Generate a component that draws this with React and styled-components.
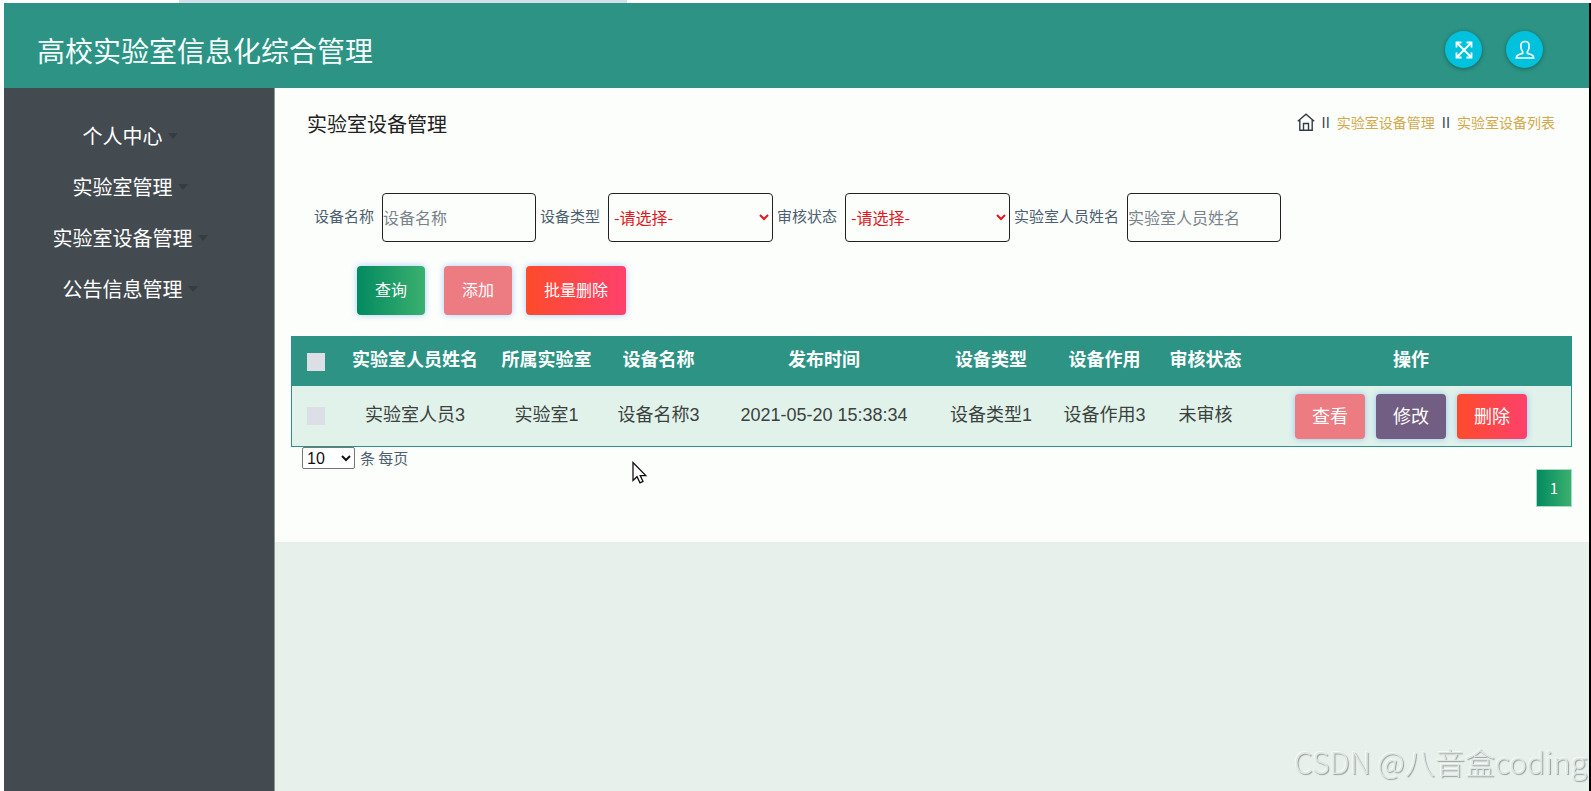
import React from 'react';
import styled, { createGlobalStyle } from 'styled-components';

const sans = '"Liberation Sans", "Noto Sans CJK SC", sans-serif';
const cjk = '"Noto Sans CJK SC", sans-serif';
const fills = {
  green: 'linear-gradient(90deg, #038a60, #3bb06f)',
  pink: '#ec7b82',
  purple: '#725e82',
  red: 'linear-gradient(90deg, #fd4b2b, #fe416c)',
};

const GlobalStyle = createGlobalStyle`
  *, *::before, *::after { box-sizing: border-box; }
  body { margin: 0; background: #fff; font-family: ${sans}; }
  button, input, select { font-family: inherit; }
`;

const Page = styled.div`
  display: flex;
  flex-direction: column;
  min-height: 100vh;
`;

const LoadingTrack = styled.div`
  height: 3px;
  padding-left: 179px;
`;

const LoadingBar = styled.div`
  width: 448px;
  max-width: 100%;
  height: 100%;
  background: #d5dfe9;
`;

const Frame = styled.div`
  flex: 1;
  display: flex;
  flex-direction: column;
  margin-left: 4px;
  border-right: 2px solid #000;
`;

const Header = styled.header`
  display: flex;
  align-items: center;
  justify-content: space-between;
  height: 85px;
  padding: 8px 46px 0 33px;
  background: #2c9385;
`;

const Brand = styled.h1`
  margin: 0;
  color: #f6fffc;
  font: 400 28px/40px ${cjk};
`;

const HeaderActions = styled.div`
  display: flex;
  gap: 24px;
`;

const RoundButton = styled.button`
  display: grid;
  place-items: center;
  width: 37px;
  height: 37px;
  padding: 0;
  border: 0;
  border-radius: 50%;
  background: #00c2dc;
  color: #fff;
  box-shadow: 0 1px 4px rgba(0, 0, 0, 0.35);
`;

const Body = styled.div`
  flex: 1;
  display: flex;
`;

const Sidebar = styled.nav`
  flex: 0 0 271px;
  padding: 22px 18px 0 0;
  background: #434a50;
  border-right: 1px solid #8a9794;
`;

const MenuItem = styled.a`
  display: flex;
  align-items: center;
  justify-content: center;
  gap: 5px;
  height: 51px;
  color: #fff;
  font: 400 20px/30px ${cjk};
  text-decoration: none;

  &::after {
    content: '';
    border: 5px solid transparent;
    border-top: 6px solid #343d40;
    border-bottom: 0;
  }
`;

const Main = styled.main`
  flex: 1;
  min-width: 0;
  background: #e7f0eb;
`;

const Panel = styled.section`
  min-height: 454px;
  padding: 20px 17px 0 16px;
  background: #fcfefb;
`;

const PanelHead = styled.div`
  display: flex;
  justify-content: space-between;
  align-items: flex-start;
  height: 32px;
  padding: 0 17px 0 16px;
`;

const PanelTitle = styled.h2`
  margin: 0;
  color: #222;
  font: 400 20px/32px ${cjk};
`;

const Breadcrumb = styled.nav`
  display: flex;
  align-items: center;
  gap: 7px;
  color: #33424f;
  font: 400 14px/28px ${cjk};

  a { color: #d3a94c; text-decoration: none; }
  svg { display: block; }
`;

const Filters = styled.form`
  padding: 53px 0 0 22px;
`;

const FieldRow = styled.div`
  display: flex;
  gap: 3px;
`;

const Field = styled.label`
  display: flex;
  align-items: center;
  gap: 8px;
  color: #4d5f70;
  font: 400 15px/24px ${cjk};
  white-space: nowrap;
`;

const FieldName = styled.span`
  padding: 0 0 4px 1px;
`;

const TextInput = styled.input`
  width: 154px;
  height: 49px;
  padding: 0 0 2px;
  border: 1px solid #222;
  border-radius: 4px;
  background: transparent;
  font-size: 16px;

  &::placeholder { color: #78838b; }
`;

const SelectInput = styled.select`
  width: 165px;
  height: 49px;
  padding: 0 2px 2px 1px;
  border: 1px solid #222;
  border-radius: 4px;
  background: transparent;
  color: #e3161d;
  font-size: 16px;
`;

const FilterActions = styled.div`
  display: flex;
  gap: 14px;
  padding: 24px 0 0 44px;

  button:first-child { margin-right: 5px; }
`;

const Button = styled.button`
  height: ${(p) => (p.$row ? 45 : 49)}px;
  padding: 0 ${(p) => (p.$row ? 17 : 18)}px 3px;
  border: 0;
  border-radius: 4px;
  background: ${(p) => fills[p.$fill]};
  box-shadow: 0 0 6px rgba(60, 140, 255, 0.45);
  color: #fff;
  font-family: ${cjk};
  font-size: ${(p) => (p.$row ? 18 : 16)}px;
`;

const RowActions = styled.div`
  display: flex;
  justify-content: center;
  gap: 11px;
  padding-top: 3px;
`;

const Table = styled.table`
  width: 100%;
  margin-top: 21px;
  table-layout: fixed;
  border-collapse: separate;
  border-spacing: 0;
  border: 1px solid #2c9385;
  color: #3c4240;
  font-size: 18px;
  line-height: 26px;
  text-align: center;

  th, td { padding: 0 0 3px; white-space: nowrap; }
  th { height: 49px; background: #2c9385; color: #fff; }
  td { height: 60px; background: #e1f2ea; }
`;

const Tick = styled.input`
  appearance: none;
  display: block;
  width: 18px;
  height: 18px;
  margin: 3px auto 0;
  background: #dce0e6;
`;

const PageSize = styled.label`
  display: flex;
  align-items: center;
  gap: 5px;
  height: 22px;
  padding-left: 11px;
  color: #4d5f70;
  font: 400 15px/20px ${cjk};

  select {
    width: 53px;
    height: 22px;
    border: 1px solid #767676;
    border-radius: 2px;
    background: #fff;
    color: #111;
    font: 400 16px ${sans};
  }
`;

const Pager = styled.div`
  display: flex;
  justify-content: flex-end;

  button {
    width: 36px;
    height: 38px;
    padding: 0 0 2px;
    border: 1px solid #a6dcc6;
    background: ${fills.green};
    color: #fff;
    font: 400 15px ${cjk};
  }
`;

const Pointer = styled.svg`
  position: absolute;
  left: 632px;
  top: 461px;
`;

const Watermark = styled.div`
  position: fixed;
  right: 4px;
  bottom: 8px;
  color: #dfe5e2;
  font: 300 30px/44px ${cjk};
  text-shadow: 1px 1px 1px #979f9c, -1px -1px 0 #f4f8f6;
`;

const menu = ['个人中心', '实验室管理', '实验室设备管理', '公告信息管理'];

const columns = [
  ['实验室人员姓名', 152],
  ['所属实验室', 111],
  ['设备名称', 113],
  ['发布时间', 218],
  ['设备类型', 116],
  ['设备作用', 111],
  ['审核状态', 91],
  ['操作', 320],
];

const rows = [
  ['实验室人员3', '实验室1', '设备名称3', '2021-05-20 15:38:34', '设备类型1', '设备作用3', '未审核'],
];

const ExpandIcon = () => (
  <svg width="18" height="18" viewBox="0 0 18 18" fill="none" stroke="currentColor" strokeWidth="1.8">
    <path d="M2 2l14 14M16 2L2 16" />
    <path d="M1.500 6.500v-5h5M11.500 1.500h5v5M16.500 11.500v5h-5M6.500 16.500h-5v-5" />
  </svg>
);

const UserIcon = () => (
  <svg width="20" height="20" viewBox="0 0 20 20" fill="none" stroke="currentColor" strokeWidth="1.7">
    <path d="M7.600 11.600C6.200 10 5.800 8 5.800 5.800C5.800 3.200 7.500 1.500 10 1.500s4.200 1.700 4.200 4.300c0 2.200-.4 4.200-1.800 5.800v1.800l4.200 1.400c1.300.5 2 1.500 2.100 3.200H1.300c.1-1.700.8-2.700 2.100-3.200l4.200-1.400z" />
  </svg>
);

const HomeIcon = () => (
  <svg width="18" height="18" viewBox="0 0 18 18" fill="none" stroke="#333c44" strokeWidth="1.4">
    <path d="M.8 8.300L9 1.200l8.200 7.100M2.800 7v10.200h12.400V7M6.500 17v-6.500h5V17" />
  </svg>
);

export default function App() {
  return (
    <Page>
      <GlobalStyle />
      <LoadingTrack><LoadingBar /></LoadingTrack>
      <Frame>
        <Header>
          <Brand>高校实验室信息化综合管理</Brand>
          <HeaderActions>
            <RoundButton type="button" aria-label="全屏"><ExpandIcon /></RoundButton>
            <RoundButton type="button" aria-label="用户"><UserIcon /></RoundButton>
          </HeaderActions>
        </Header>
        <Body>
          <Sidebar>
            {menu.map((name) => <MenuItem key={name} href="#">{name}</MenuItem>)}
          </Sidebar>
          <Main>
            <Panel>
              <PanelHead>
                <PanelTitle>实验室设备管理</PanelTitle>
                <Breadcrumb>
                  <a href="#" aria-label="首页"><HomeIcon /></a>
                  <span>II</span>
                  <a href="#">实验室设备管理</a>
                  <span>II</span>
                  <a href="#">实验室设备列表</a>
                </Breadcrumb>
              </PanelHead>
              <Filters onSubmit={(e) => e.preventDefault()}>
                <FieldRow>
                  <Field><FieldName>设备名称</FieldName><TextInput placeholder="设备名称" /></Field>
                  <Field><FieldName>设备类型</FieldName><SelectInput><option>-请选择-</option></SelectInput></Field>
                  <Field><FieldName>审核状态</FieldName><SelectInput><option>-请选择-</option></SelectInput></Field>
                  <Field><FieldName>实验室人员姓名</FieldName><TextInput placeholder="实验室人员姓名" /></Field>
                </FieldRow>
                <FilterActions>
                  <Button $fill="green">查询</Button>
                  <Button type="button" $fill="pink">添加</Button>
                  <Button type="button" $fill="red">批量删除</Button>
                </FilterActions>
              </Filters>
              <Table>
                <colgroup>
                  <col width="47" />
                  {columns.map(([name, width]) => <col key={name} width={width} />)}
                </colgroup>
                <thead>
                  <tr>
                    <th><Tick type="checkbox" aria-label="全选" /></th>
                    {columns.map(([name]) => <th key={name}>{name}</th>)}
                  </tr>
                </thead>
                <tbody>
                  {rows.map((row) => (
                    <tr key={row[0]}>
                      <td><Tick type="checkbox" aria-label={row[0]} /></td>
                      {row.map((cell) => <td key={cell}>{cell}</td>)}
                      <td>
                        <RowActions>
                          <Button type="button" $row $fill="pink">查看</Button>
                          <Button type="button" $row $fill="purple">修改</Button>
                          <Button type="button" $row $fill="red">删除</Button>
                        </RowActions>
                      </td>
                    </tr>
                  ))}
                </tbody>
              </Table>
              <PageSize>
                <select><option>10</option></select>
                条 每页
              </PageSize>
              <Pager><button type="button">1</button></Pager>
            </Panel>
          </Main>
        </Body>
      </Frame>
      <Pointer width="16" height="24" viewBox="0 0 16 24" fill="#fff" stroke="#111" strokeWidth="1.300" aria-hidden="true">
        <path d="M1 1.500v18l4-3.800 3 6.100 3-1.400-2.800-5.800h5.600z" />
      </Pointer>
      <Watermark>CSDN @八音盒coding</Watermark>
    </Page>
  );
}
